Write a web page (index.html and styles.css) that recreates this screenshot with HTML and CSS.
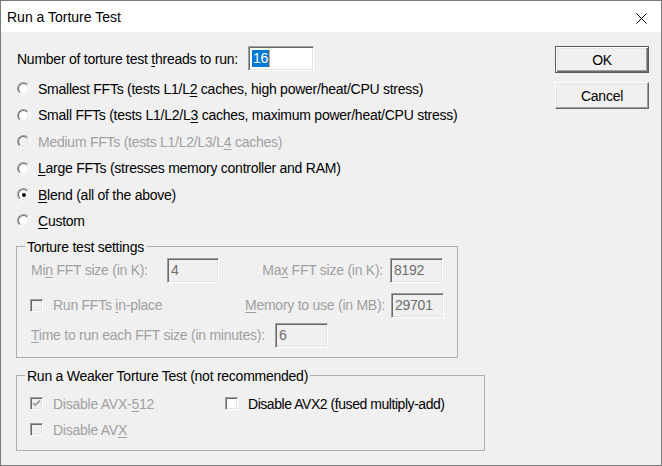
FILE: index.html
```html
<!DOCTYPE html>
<html>
<head>
<meta charset="utf-8">
<title>Run a Torture Test</title>
<link rel="stylesheet" href="styles.css">
</head>
<body>
<div class="window">
  <div class="titlebar">
    <span class="title">Run a Torture Test</span>
    <svg class="close" width="11" height="11" viewBox="0 0 11 11"><path d="M0.5 0.5L10.5 10.5M10.5 0.5L0.5 10.5" stroke="#000" stroke-width="1" fill="none"/></svg>
  </div>
  <div class="content">
    <div class="main">
      <div class="threads-row">
        <span class="threads-label">Number of torture test <u>t</u>hreads to run:</span>
        <div class="field field-white"><span class="sel">16</span><span class="caret"></span></div>
      </div>
      <div class="radios">
        <div class="radio-row"><span class="radio"></span><span>Smallest FFTs (tests L1/L<u>2</u> caches, high power/heat/CPU stress)</span></div>
        <div class="radio-row"><span class="radio"></span><span>Small FFTs (tests L1/L2/L<u>3</u> caches, maximum power/heat/CPU stress)</span></div>
        <div class="radio-row disabled"><span class="radio radio-disabled"></span><span>Medium FFTs (tests L1/L2/L3/L<u>4</u> caches)</span></div>
        <div class="radio-row"><span class="radio"></span><span><u>L</u>arge FFTs (stresses memory controller and RAM)</span></div>
        <div class="radio-row"><span class="radio checked"></span><span><u>B</u>lend (all of the above)</span></div>
        <div class="radio-row"><span class="radio"></span><span><u>C</u>ustom</span></div>
      </div>
      <fieldset class="group group-settings">
        <legend>Torture test settings</legend>
        <div class="set-row row-a disabled">
          <span class="lbl-min">Mi<u>n</u> FFT size (in K):</span>
          <div class="field field-dis w52">4</div>
          <span class="lbl-max">Ma<u>x</u> FFT size (in K):</span>
          <div class="field field-dis w53">8192</div>
        </div>
        <div class="set-row row-b disabled">
          <span class="check-item w189"><span class="cb cb-disabled"></span><span>Run FFTs <u>i</u>n-place</span></span>
          <span class="lbl-mem"><u>M</u>emory to use (in MB):</span>
          <div class="field field-dis w53">29701</div>
        </div>
        <div class="set-row row-c disabled">
          <span class="lbl-time"><u>T</u>ime to run each FFT size (in minutes):</span>
          <div class="field field-dis w53">6</div>
        </div>
      </fieldset>
      <fieldset class="group group-weak">
        <legend>Run a Weaker Torture Test (not recommended)</legend>
        <div class="cb-row">
          <span class="check-item w195 disabled"><span class="cb cb-disabled"><svg width="11" height="11" viewBox="0 0 11 11"><path d="M2 5L4.2 7.3L9 2.5" stroke="#a0a0a0" stroke-width="1.8" fill="none"/></svg></span><span>Disable AVX-<u>5</u>12</span></span>
          <span class="check-item"><span class="cb"></span><span class="tight">Disable AVX2 (<u>f</u>used multiply-add)</span></span>
        </div>
        <div class="cb-row">
          <span class="check-item disabled"><span class="cb cb-disabled"></span><span>Disable AV<u>X</u></span></span>
        </div>
      </fieldset>
    </div>
    <div class="buttons">
      <div class="btn btn-default">OK</div>
      <div class="btn">Cancel</div>
    </div>
  </div>
</div>
</body>
</html>
```
FILE: styles.css
```css
* { box-sizing: border-box; }
html, body { margin: 0; padding: 0; }
body {
  width: 662px;
  height: 466px;
  overflow: hidden;
  background: #f0f0f0;
  font-family: "Liberation Sans", Arial, sans-serif;
  font-size: 14px;
  letter-spacing: -0.25px;
  line-height: 16px;
  color: #000;
}
u { text-decoration: underline; text-underline-offset: 2px; }
.window {
  width: 662px;
  height: 466px;
  border: 1px solid #7a7a7a;
  display: flex;
  flex-direction: column;
  background: #f0f0f0;
}
.titlebar {
  height: 31px;
  flex: none;
  background: #fff;
  display: flex;
  align-items: center;
  justify-content: space-between;
  padding: 0 14px 0 6px;
}
.title { font-size: 14px; letter-spacing: 0; }
.close { margin-top: 3px; display: block; }
.content {
  flex: 1;
  display: flex;
  padding: 14px 0 0 15px;
}
.main {
  width: 539px;
  display: flex;
  flex-direction: column;
}
.threads-row {
  display: flex;
  align-items: center;
  height: 25px;
}
.threads-label { width: 232px; padding-left: 1px; }
.field {
  height: 25px;
  border: 1px solid;
  border-color: #a0a0a0 #fff #fff #a0a0a0;
  box-shadow: inset 1px 1px 0 #696969, inset -1px -1px 0 #e3e3e3;
  display: flex;
  align-items: center;
  padding-left: 3px;
  flex: none;
}
.field-white { width: 66px; background: #fff; }
.field-dis { background: #f0f0f0; color: #6d6d6d; }
.w52 { width: 52px; }
.w53 { width: 53px; }
.sel {
  background: #0078d7;
  color: #fff;
  height: 17px;
  line-height: 17px;
  padding: 0 1px;
}
.caret { width: 1px; height: 17px; background: #f4a460; }
.radios { margin-top: 4.8px; }
.radio-row {
  height: 26.4px;
  display: flex;
  align-items: center;
  gap: 8px;
  padding-left: 1px;
}
.disabled { color: #a0a0a0; }
.radio {
  position: relative;
  flex: none;
  width: 13px;
  height: 13px;
  border-radius: 50%;
  border: 1px solid;
  border-color: #a0a0a0 #fff #fff #a0a0a0;
}
.radio::before {
  content: "";
  position: absolute;
  inset: 0;
  border-radius: 50%;
  border: 1px solid;
  border-color: #696969 #e3e3e3 #e3e3e3 #696969;
  background: #fff;
}
.radio-disabled::before { background: #f0f0f0; }
.radio.checked::after {
  content: "";
  position: absolute;
  left: 3.5px;
  top: 3.5px;
  width: 4px;
  height: 4px;
  border-radius: 50%;
  background: #000;
}
.cb {
  flex: none;
  width: 13px;
  height: 13px;
  border: 1px solid;
  border-color: #a0a0a0 #fff #fff #a0a0a0;
  box-shadow: inset 1px 1px 0 #696969, inset -1px -1px 0 #e3e3e3;
  background: #fff;
  display: flex;
  align-items: center;
  justify-content: center;
}
.cb svg { display: block; }
.cb-disabled { background: #f0f0f0; }
.check-item {
  display: flex;
  align-items: center;
  gap: 10px;
}
.tight { letter-spacing: -0.45px; }
.w189 { width: 189px; flex: none; }
.w195 { width: 195px; flex: none; }
.group {
  margin: 0;
  padding: 0;
  border: 1px solid #adadad;
  min-width: 0;
}
.group legend {
  padding: 0 2px;
  margin-left: -5px;
  line-height: 16px;
  color: #000;
}
.group-settings {
  width: 442px;
  margin-top: 4.8px;
  padding: 3px 0 9px 13px;
}
.set-row {
  display: flex;
  align-items: center;
  height: 25px;
}
.row-b { margin-top: 10px; }
.row-c { margin-top: 5px; }
.lbl-min { width: 137px; padding-left: 1px; flex: none; }
.lbl-max { width: 171px; padding-right: 7px; text-align: right; flex: none; }
.lbl-mem { width: 172px; padding-right: 6px; text-align: right; flex: none; }
.lbl-time { width: 245px; padding-left: 1px; flex: none; }
.group-weak {
  width: 469px;
  margin-top: 10px;
  padding: 7px 0 7px 13px;
}
.cb-row {
  display: flex;
  align-items: center;
  height: 26px;
}
.buttons {
  width: 94px;
  display: flex;
  flex-direction: column;
  gap: 9px;
}
.btn {
  height: 27px;
  display: flex;
  align-items: center;
  justify-content: center;
  background: #f0f0f0;
  border: 1px solid;
  border-color: #fff #696969 #696969 #fff;
  box-shadow: inset -1px -1px 0 #a0a0a0, inset 1px 1px 0 #e3e3e3;
}
.btn-default {
  border: 1px solid #5a5a5a;
  box-shadow: inset 1px 1px 0 #fff, inset -1px -1px 0 #696969, inset -2px -2px 0 #a0a0a0, inset 2px 2px 0 #e3e3e3;
}
```
